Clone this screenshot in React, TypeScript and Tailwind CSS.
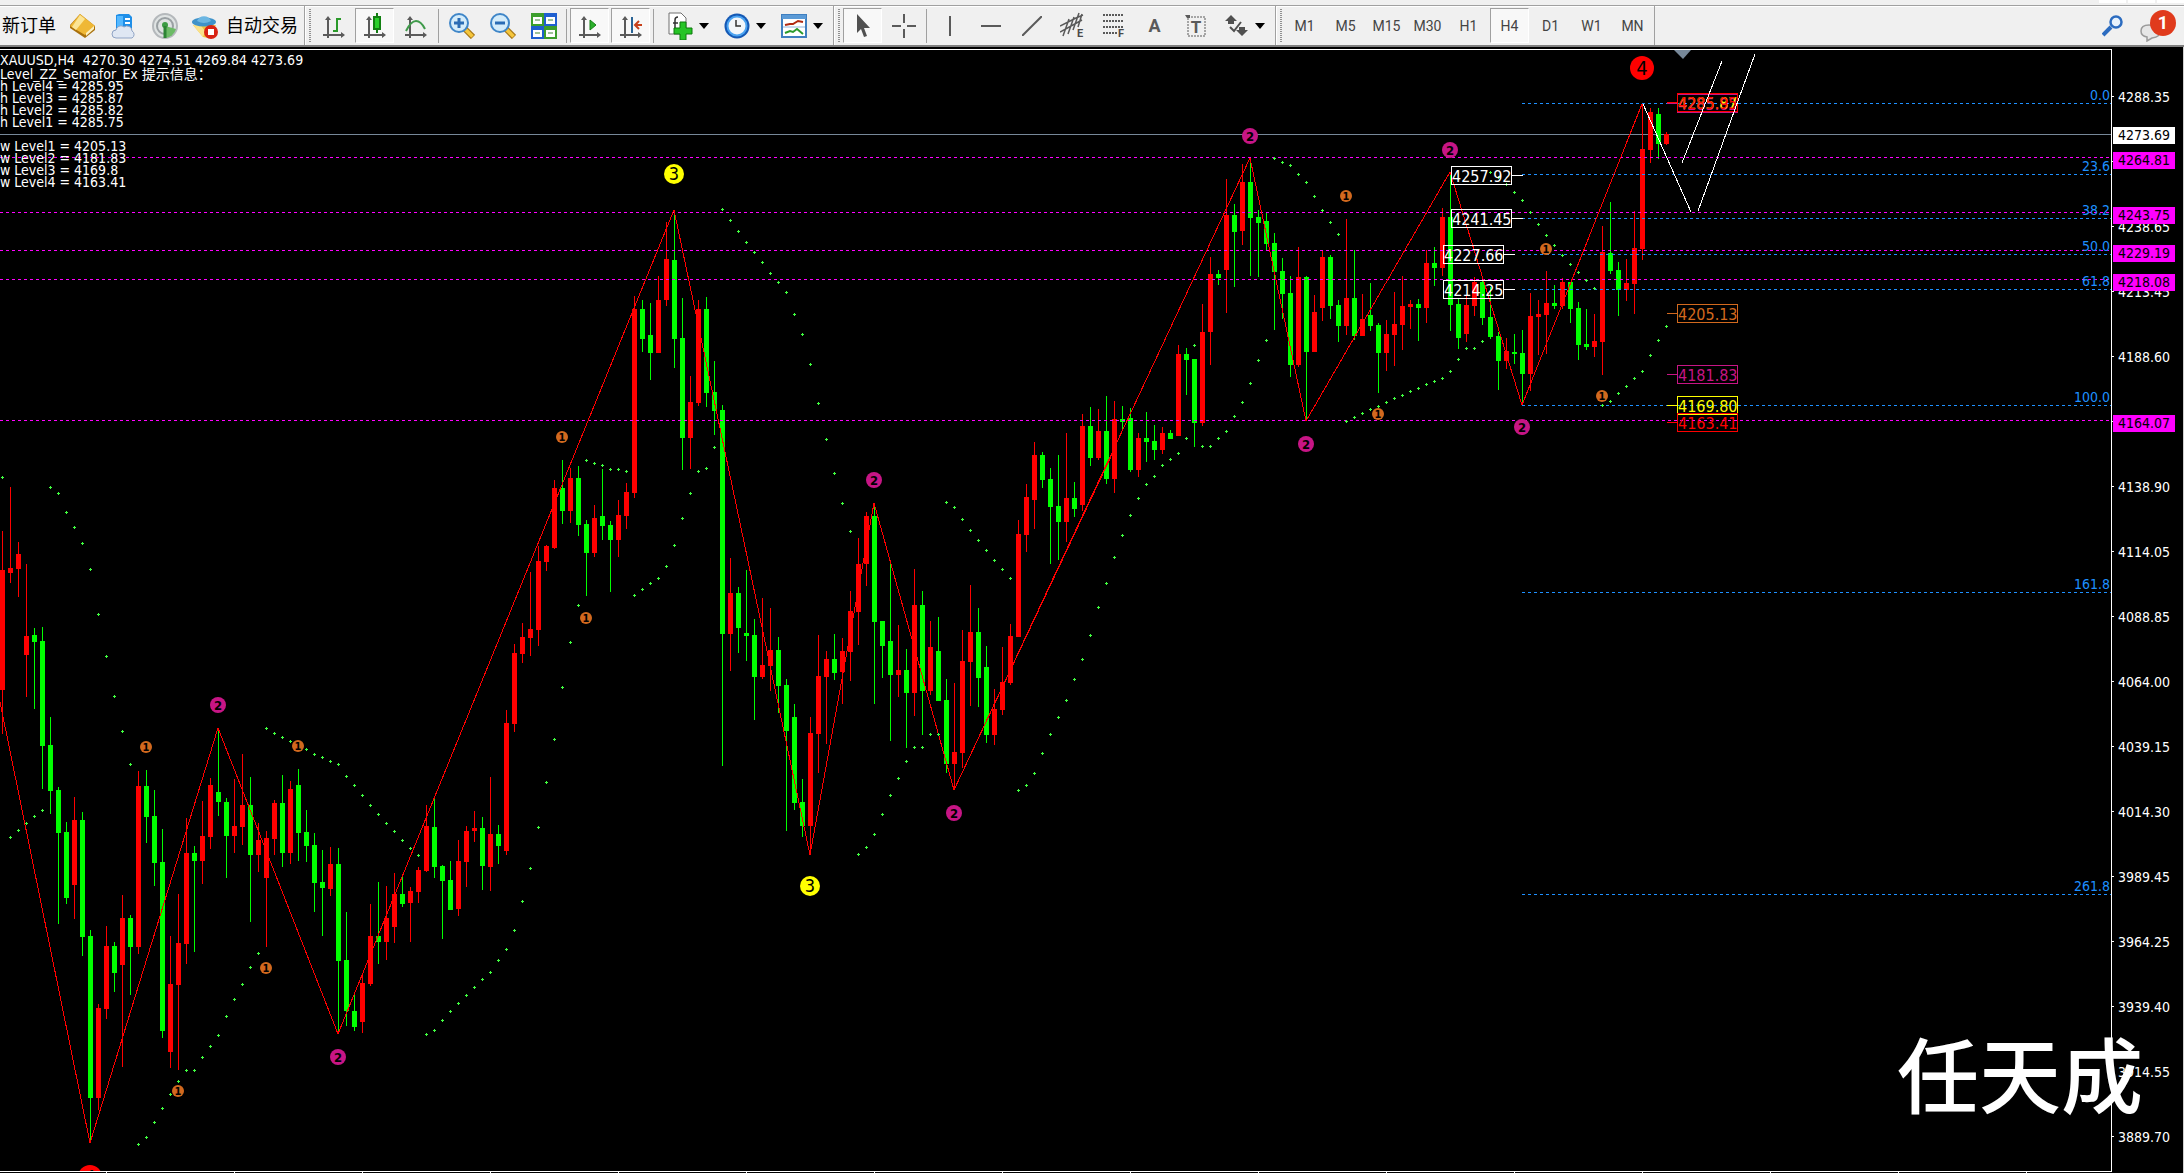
import type { ReactNode } from "react";

type Candle = [dir: number, high: number, top: number, bottom: number, low: number];

const STEP = 8;
const TOP = 50;

const candles: Candle[] = [
  [1, 531, 570, 690, 734], [1, 487, 568, 573, 583], [1, 542, 554, 569, 597], [1, 564, 636, 655, 697],
  [0, 628, 635, 642, 709], [0, 627, 641, 746, 789], [0, 717, 745, 791, 814], [0, 787, 790, 833, 924],
  [0, 822, 832, 898, 904], [1, 797, 820, 885, 919], [0, 812, 820, 937, 956], [0, 930, 936, 1098, 1143],
  [1, 1004, 1008, 1098, 1110], [1, 926, 946, 1009, 1019], [0, 942, 946, 973, 992], [1, 895, 918, 965, 1067],
  [0, 915, 918, 947, 995], [1, 771, 786, 947, 954], [0, 770, 786, 817, 843], [0, 790, 816, 863, 886],
  [0, 829, 862, 1031, 1038], [1, 936, 984, 1052, 1068], [1, 894, 943, 985, 1070], [1, 818, 853, 944, 964],
  [0, 846, 853, 861, 952], [1, 801, 836, 861, 884], [1, 778, 785, 837, 849], [0, 730, 792, 802, 816],
  [0, 798, 802, 836, 878], [1, 779, 826, 836, 853], [1, 754, 805, 827, 845], [0, 777, 805, 855, 922],
  [1, 823, 840, 855, 872], [1, 831, 838, 878, 947], [1, 800, 803, 839, 855], [0, 775, 803, 853, 867],
  [1, 781, 789, 853, 864], [0, 769, 785, 833, 861], [0, 810, 832, 846, 862], [0, 833, 845, 883, 912],
  [0, 850, 882, 888, 936], [1, 847, 864, 889, 896], [0, 848, 864, 961, 1034], [0, 912, 960, 1011, 1026],
  [0, 995, 1011, 1027, 1031], [1, 975, 983, 1022, 1033], [1, 904, 936, 984, 986], [0, 882, 936, 942, 964],
  [1, 886, 918, 942, 960], [1, 873, 894, 927, 943], [0, 874, 894, 904, 907], [1, 887, 891, 903, 942],
  [1, 867, 870, 892, 903], [1, 805, 826, 871, 872], [0, 797, 827, 867, 878], [0, 865, 866, 881, 939],
  [0, 861, 880, 910, 910], [1, 840, 861, 909, 916], [1, 826, 831, 862, 887], [1, 811, 828, 831, 842],
  [0, 817, 828, 866, 890], [1, 777, 834, 867, 891], [0, 825, 834, 846, 864], [1, 710, 723, 851, 855],
  [1, 644, 653, 724, 732], [1, 623, 637, 654, 663], [1, 572, 629, 638, 656], [1, 546, 561, 630, 646],
  [1, 545, 546, 562, 571], [1, 480, 488, 548, 549], [0, 460, 488, 511, 524], [1, 468, 478, 511, 523],
  [0, 466, 478, 525, 536], [0, 520, 524, 553, 596], [1, 505, 518, 553, 557], [0, 469, 516, 526, 540],
  [0, 521, 525, 540, 592], [1, 500, 515, 540, 557], [1, 483, 492, 516, 529], [1, 296, 309, 493, 498],
  [0, 300, 309, 339, 352], [0, 303, 335, 353, 380], [1, 276, 300, 353, 353], [1, 222, 259, 300, 306],
  [0, 212, 260, 339, 368], [0, 298, 338, 438, 470], [1, 376, 402, 438, 469], [1, 300, 309, 403, 406],
  [0, 297, 309, 393, 407], [0, 361, 392, 411, 435], [0, 405, 410, 634, 766], [1, 558, 593, 634, 671],
  [0, 587, 593, 628, 653], [0, 570, 633, 636, 661], [0, 619, 635, 677, 720], [1, 598, 665, 677, 679],
  [1, 608, 650, 666, 691], [0, 637, 650, 686, 713], [0, 679, 685, 731, 831], [0, 704, 717, 803, 810],
  [0, 779, 802, 826, 837], [1, 717, 733, 826, 855], [1, 635, 676, 734, 773], [1, 651, 659, 677, 744],
  [0, 634, 659, 673, 680], [1, 638, 651, 672, 704], [1, 591, 611, 652, 681], [1, 538, 564, 612, 645],
  [1, 512, 516, 564, 586], [0, 504, 516, 622, 704], [0, 621, 621, 646, 678], [0, 562, 641, 675, 741],
  [1, 625, 670, 675, 697], [0, 649, 670, 693, 748], [1, 569, 605, 693, 716], [0, 591, 605, 691, 735],
  [1, 621, 647, 691, 695], [0, 617, 651, 701, 701], [0, 679, 700, 764, 773], [1, 683, 752, 764, 790],
  [1, 630, 661, 753, 768], [1, 585, 632, 662, 706], [0, 608, 632, 678, 707], [0, 646, 667, 735, 743],
  [1, 689, 709, 735, 745], [1, 647, 682, 710, 715], [1, 624, 636, 683, 685], [1, 520, 534, 637, 637],
  [1, 484, 497, 535, 552], [1, 442, 455, 500, 529], [0, 452, 455, 480, 488], [0, 468, 479, 507, 564],
  [0, 455, 506, 522, 560], [1, 433, 498, 522, 542], [0, 482, 498, 509, 517], [1, 414, 426, 505, 511],
  [0, 407, 426, 458, 466], [1, 409, 431, 458, 460], [0, 396, 431, 479, 484], [1, 401, 419, 479, 493],
  [0, 406, 419, 422, 429], [0, 408, 418, 470, 472], [1, 433, 438, 470, 477], [0, 412, 438, 442, 462],
  [0, 425, 441, 450, 460], [1, 427, 433, 450, 454], [0, 430, 433, 439, 439], [1, 345, 354, 436, 436],
  [0, 348, 354, 360, 395], [0, 359, 359, 423, 447], [1, 304, 332, 423, 426], [1, 257, 274, 332, 365],
  [0, 270, 274, 278, 285], [1, 179, 215, 270, 313], [0, 204, 215, 232, 287], [1, 164, 182, 231, 245],
  [0, 160, 182, 218, 276], [0, 210, 217, 223, 277], [0, 213, 221, 244, 251], [0, 233, 243, 272, 330],
  [0, 258, 271, 294, 319], [0, 276, 293, 365, 377], [1, 247, 277, 365, 367], [0, 276, 277, 352, 421],
  [1, 295, 312, 352, 352], [1, 250, 257, 308, 321], [0, 255, 257, 306, 319], [0, 300, 305, 326, 342],
  [1, 219, 298, 326, 335], [0, 250, 298, 336, 340], [1, 294, 319, 336, 336], [0, 283, 315, 326, 331],
  [0, 323, 325, 353, 393], [1, 320, 334, 353, 371], [1, 292, 324, 335, 366], [1, 276, 306, 325, 350],
  [1, 300, 304, 307, 329], [0, 299, 304, 308, 341], [1, 250, 263, 308, 323], [0, 247, 263, 268, 286],
  [1, 208, 217, 268, 276], [0, 173, 217, 305, 331], [0, 299, 304, 338, 349], [1, 295, 305, 334, 342],
  [1, 277, 282, 306, 316], [0, 280, 282, 318, 325], [0, 287, 317, 337, 339], [0, 332, 336, 361, 390],
  [1, 338, 351, 361, 369], [0, 334, 352, 354, 364], [0, 330, 353, 374, 405], [1, 293, 316, 374, 391],
  [1, 300, 314, 317, 355], [1, 271, 303, 315, 354], [0, 285, 303, 306, 309], [1, 278, 282, 306, 309],
  [0, 282, 282, 309, 323], [0, 302, 308, 345, 360], [0, 309, 344, 347, 350], [1, 314, 341, 347, 357],
  [1, 226, 252, 342, 375], [0, 202, 253, 271, 274], [0, 262, 270, 290, 316], [1, 259, 283, 290, 301],
  [1, 211, 248, 284, 314], [1, 104, 149, 249, 260], [1, 108, 112, 150, 163], [0, 108, 114, 144, 159],
  [1, 132, 134, 144, 145],
];

const sar = [
  477, 837, 830, 823, 816, 810, 487, 493, 512, 527, 543, 569, 614, 656, 696, 731, 764, 1144, 1137, 1122,
  1108, 1094, 1081, 1070, 1070, 1057, 1046, 1035, 1016, 999, 984, 967, 953, 728, 733, 737, 741, 746, 749, 754,
  757, 761, 764, 776, 785, 795, 805, 814, 823, 831, 840, 848, 855, 1034, 1030, 1020, 1011, 1003, 995, 987,
  979, 972, 960, 949, 930, 901, 868, 827, 782, 739, 687, 642, 605, 460, 463, 465, 469, 469, 471, 595,
  589, 583, 578, 566, 545, 518, 493, 471, 468, 447, 209, 220, 231, 242, 252, 262, 273, 282, 292, 314,
  334, 364, 403, 439, 473, 503, 531, 854, 847, 834, 814, 795, 778, 761, 747, 747, 734, 734, 502, 507,
  519, 530, 540, 550, 560, 569, 578, 790, 785, 773, 753, 734, 717, 700, 679, 659, 635, 607, 583, 557,
  535, 515, 498, 484, 476, 465, 459, 453, 438, 345, 446, 446, 438, 431, 416, 402, 383, 360, 340, 158,
  162, 165, 174, 182, 196, 210, 222, 234, 421, 417, 413, 409, 406, 402, 398, 395, 391, 388, 384, 381,
  378, 371, 359, 348, 348, 341, 172, 177, 184, 192, 200, 212, 224, 235, 245, 255, 264, 272, 280, 288,
  405, 401, 393, 386, 378, 371, 355, 340, 326,
];

const zigzag =
  "0,702 90,1143 218,728 338,1034 674,210 810,855 874,503 954,790 1250,158 1306,421 1450,172 1522,405 1642,104";

const semafor = [
  { level: 1, x: 146, y: 747 }, { level: 1, x: 298, y: 746 }, { level: 1, x: 266, y: 968 },
  { level: 1, x: 178, y: 1091 }, { level: 1, x: 562, y: 437 }, { level: 1, x: 586, y: 618 },
  { level: 1, x: 1346, y: 196 }, { level: 1, x: 1378, y: 414 }, { level: 1, x: 1546, y: 249 },
  { level: 1, x: 1602, y: 396 }, { level: 2, x: 218, y: 705 }, { level: 2, x: 338, y: 1057 },
  { level: 2, x: 874, y: 480 }, { level: 2, x: 954, y: 813 }, { level: 2, x: 1250, y: 136 },
  { level: 2, x: 1450, y: 150 }, { level: 2, x: 1306, y: 444 }, { level: 2, x: 1522, y: 427 },
  { level: 3, x: 674, y: 174 }, { level: 3, x: 810, y: 886 }, { level: 4, x: 1642, y: 68 },
  { level: 4, x: 90, y: 1177 },
];

const semaforStyle = [
  { r: 6, size: 11, fill: "#d2691e" },
  { r: 8, size: 13, fill: "#c71585" },
  { r: 10, size: 18, fill: "#ffff00" },
  { r: 12, size: 20, fill: "#ff0000" },
];

const supports = [157, 212, 250, 279, 420];

const fibs = [
  { y: 103, label: "0.0" },
  { y: 174, label: "23.6" },
  { y: 218, label: "38.2" },
  { y: 254, label: "50.0" },
  { y: 289, label: "61.8" },
  { y: 405, label: "100.0" },
  { y: 592, label: "161.8" },
  { y: 894, label: "261.8" },
];

const leftTags = [
  { x: 1451, y: 166, text: "4257.92" },
  { x: 1451, y: 209, text: "4241.45" },
  { x: 1443, y: 245, text: "4227.66" },
  { x: 1443, y: 280, text: "4214.25" },
];

const rightTags = [
  { y: 94, text: "4285.82", color: "#c71585" },
  { y: 93, text: "4285.87", color: "#ffff00" },
  { y: 93, text: "4285.95", color: "#ff0000" },
  { y: 304, text: "4205.13", color: "#d2691e" },
  { y: 365, text: "4181.83", color: "#c71585" },
  { y: 396, text: "4169.80", color: "#ffff00" },
  { y: 413, text: "4163.41", color: "#ff0000" },
];

const prices = [
  "4288.35", "4263.50", "4238.65", "4213.45", "4188.60", "4163.75", "4138.90", "4114.05", "4088.85",
  "4064.00", "4039.15", "4014.30", "3989.45", "3964.25", "3939.40", "3914.55", "3889.70",
];

const priceMarks = [
  { y: 126, text: "4273.69", style: "bg-white" },
  { y: 151, text: "4264.81", style: "bg-[#ff00ff]" },
  { y: 206, text: "4243.75", style: "bg-[#ff00ff]" },
  { y: 244, text: "4229.19", style: "bg-[#ff00ff]" },
  { y: 273, text: "4218.08", style: "bg-[#ff00ff]" },
  { y: 414, text: "4164.07", style: "bg-[#ff00ff]" },
];

const comment = [
  "Level_ZZ_Semafor_Ex 提示信息：",
  "h Level4 = 4285.95",
  "h Level3 = 4285.87",
  "h Level2 = 4285.82",
  "h Level1 = 4285.75",
  "",
  "w Level1 = 4205.13",
  "w Level2 = 4181.83",
  "w Level3 = 4169.8",
  "w Level4 = 4163.41",
];

const timeframes = ["M1", "M5", "M15", "M30", "H1", "H4", "D1", "W1", "MN"];

function ToolButton({ label, active, children }: { label: string; active?: boolean; children: ReactNode }) {
  return (
    <button
      type="button"
      aria-label={label}
      className={
        active
          ? "flex h-[35px] w-[39px] shrink-0 items-center justify-center border border-[#a0a0a0] border-r-white border-b-white bg-[#f8f8f8]"
          : "flex h-[35px] w-[39px] shrink-0 items-center justify-center"
      }
    >
      {children}
    </button>
  );
}

function MenuButton({ label, children }: { label: string; children: ReactNode }) {
  return (
    <button type="button" aria-label={label} className="flex h-[35px] w-[55px] shrink-0 items-center gap-1.5 pl-1.5">
      {children}
      <svg className="shrink-0" width="10" height="6" viewBox="0 0 10 6">
        <path d="M0 0h10L5 6z" fill="#000" />
      </svg>
    </button>
  );
}

function Separator() {
  return <div className="mx-[3px] h-[34px] w-px shrink-0 bg-[#a0a0a0]" />;
}

function Grip() {
  return (
    <div className="ml-[3px] flex h-full shrink-0 items-center gap-[3px] border-l border-[#a0a0a0] pr-[3px]">
      <div className="h-full w-px bg-white" />
      <div className="h-[33px] w-0.5 bg-[repeating-linear-gradient(to_bottom,#909090_0_1px,#f0f0f0_1px_2px)]" />
    </div>
  );
}

function Axes({ children }: { children: ReactNode }) {
  return (
    <svg width="22" height="26" viewBox="0 0 22 26" fill="none" stroke="#5a5a5a" strokeWidth="2">
      <path d="M5 6v19M0 22h19" />
      <path d="M5 3l3 4H2zM22 22l-4-3v6z" fill="#5a5a5a" stroke="none" />
      {children}
    </svg>
  );
}

function Magnifier({ plus }: { plus?: boolean }) {
  return (
    <svg width="26" height="26" viewBox="0 0 26 26">
      <path d="M15 15l9 9" stroke="#a8781a" strokeWidth="6" />
      <path d="M15 15l8.500 8.500" stroke="#f5c63c" strokeWidth="3.500" />
      <circle cx="10" cy="10" r="9" fill="#d4ecfa" stroke="#3f86c8" strokeWidth="2" />
      <path d="M5 10h10" stroke="#2a6cb5" strokeWidth="3" />
      {plus && <path d="M10 5v10" stroke="#2a6cb5" strokeWidth="3" />}
    </svg>
  );
}

function Toolbar() {
  return (
    <header className="shrink-0 bg-[#f0f0f0] font-[Roboto,'Noto_Sans_CJK_SC',sans-serif] text-black">
      <div className="flex h-[5px] justify-end gap-0.5">
        <div className="h-[3px] w-[27px] bg-white" />
        <div className="h-[3px] w-[27px] bg-white" />
        <div className="h-[3px] w-[27px] bg-white" />
      </div>
      <div className="flex h-10 items-center border-t border-[#a0a0a0] shadow-[inset_0_1px_0_#fff]">
        <button type="button" className="h-[35px] w-[63px] shrink-0 pl-0.5 text-left text-lg whitespace-nowrap">
          新订单
        </button>
        <div className="flex shrink-0 gap-0.5">
          <ToolButton label="Market watch">
            <svg width="26" height="26" viewBox="0 0 26 26">
              <path d="M10 1l15 12v4L15 25 0 15v-3z" fill="#a8700c" />
              <path d="M10 1l15 12-10 9L0 13z" fill="#efb836" />
              <path d="M10 2l5 4-9 11-4-3z" fill="#fbe596" />
              <path d="M16 20l8-7v3l-8 7z" fill="#fdf0c0" />
            </svg>
          </ToolButton>
          <ToolButton label="Virtual hosting">
            <svg width="26" height="26" viewBox="0 0 26 26">
              <path d="M5 2l3-1h10l3 3v13H5z" fill="#1f8fe8" />
              <path d="M6 3h6v12H6z" fill="#54b8ff" />
              <path d="M14 6h5M14 10h5" stroke="#fff" strokeWidth="2" />
              <path d="M5 25a4 4 0 010-8 5 5 0 018-3 5 5 0 018 4 4 4 0 010 7z" fill="#dfe7f3" stroke="#8fa3c4" />
            </svg>
          </ToolButton>
          <ToolButton label="Signals">
            <svg width="26" height="26" viewBox="0 0 26 26" fill="none">
              <circle cx="13" cy="13" r="12" fill="#dfe3e3" stroke="#b4b8bb" strokeWidth="2" />
              <circle cx="13" cy="13" r="8" stroke="#9aa0a3" strokeWidth="2" />
              <path d="M13 13v12a12 12 0 0011-9z" fill="#6cbb66" />
              <circle cx="13" cy="12" r="3" fill="#3c9c44" />
              <path d="M13 13v12" stroke="#2c8434" strokeWidth="3" />
            </svg>
          </ToolButton>
        </div>
        <button type="button" className="flex h-[35px] w-[117px] shrink-0 items-center gap-2 pl-2 text-lg whitespace-nowrap">
          <svg className="shrink-0" width="26" height="26" viewBox="0 0 26 26">
            <path d="M1 12h23l-8 13-5-1z" fill="#f0c53e" />
            <path d="M1 12l6-2 6 8-2 6z" fill="#fae28a" />
            <ellipse cx="12" cy="9" rx="12" ry="4.500" fill="#3f92c9" />
            <path d="M5 8a7.500 7.500 0 0114 0q-7 4-14 0z" fill="#6cb6e2" />
            <circle cx="19" cy="19" r="7" fill="#d92314" />
            <path d="M16 16h6v6h-6z" fill="#fff" />
          </svg>
          自动交易
        </button>
        <Grip />
        <div className="flex shrink-0 gap-0.5">
          <ToolButton label="Bar chart">
            <Axes>
              <path d="M14 5v14M14 6h4M10 18h4" stroke="#2a9a2a" />
            </Axes>
          </ToolButton>
          <ToolButton label="Candlesticks" active>
            <Axes>
              <path d="M13 0v20" stroke="#127a12" />
              <path d="M10 4h6v12h-6z" fill="#2bd02b" stroke="#128012" />
            </Axes>
          </ToolButton>
          <ToolButton label="Line chart">
            <Axes>
              <path d="M1 18Q6 8 11 8t9 8" stroke="#3f9a4a" />
            </Axes>
          </ToolButton>
        </div>
        <Separator />
        <div className="flex shrink-0 gap-0.5">
          <ToolButton label="Zoom in">
            <Magnifier plus />
          </ToolButton>
          <ToolButton label="Zoom out">
            <Magnifier />
          </ToolButton>
          <ToolButton label="Tile windows">
            <svg width="26" height="26" viewBox="0 0 26 26">
              <path d="M0 0h13v13H0zM13 13h13v13H13z" fill="#3c9e2c" />
              <path d="M13 0h13v13H13zM0 13h13v13H0z" fill="#1f5fd0" />
              <path d="M2 4h9v7H2zM15 4h9v7h-9zM2 17h9v7H2zM15 17h9v7h-9z" fill="#fff" />
              <path d="M4 7h5M17 7h5M4 20h5M17 20h5" stroke="#9ec39a" strokeWidth="2" />
            </svg>
          </ToolButton>
        </div>
        <Separator />
        <div className="flex shrink-0 gap-0.5">
          <ToolButton label="Auto scroll" active>
            <Axes>
              <path d="M11 7l6 5-6 5z" fill="#2bb02b" stroke="#168016" strokeWidth="1" />
            </Axes>
          </ToolButton>
          <ToolButton label="Chart shift" active>
            <Axes>
              <path d="M12 4v16" stroke="#2a6496" />
              <path d="M22 12h-7m4-4l-4 4 4 4" stroke="#c8401a" />
            </Axes>
          </ToolButton>
        </div>
        <Separator />
        <div className="flex shrink-0 gap-0.5 pl-1">
          <MenuButton label="Indicators">
            <svg className="shrink-0" width="26" height="28" viewBox="0 0 26 28">
              <path d="M2 1h12l5 5v16H2z" fill="#fff" stroke="#707070" />
              <path d="M8 18V8q0-3 3-3M6 11h5" stroke="#333" fill="none" strokeWidth="1.500" />
              <path d="M13 10h6v6h6v6h-6v6h-6v-6H7v-6h6z" fill="#25c425" stroke="#0c7a0c" />
            </svg>
          </MenuButton>
          <MenuButton label="Periods">
            <svg className="shrink-0" width="26" height="26" viewBox="0 0 26 26">
              <circle cx="13" cy="13" r="12.500" fill="#1458b4" />
              <circle cx="13" cy="13" r="10.500" fill="#4aa2f0" />
              <circle cx="13" cy="13" r="8.500" fill="#f2f6fa" />
              <path d="M12 7v6h5" stroke="#333" strokeWidth="1.500" fill="none" />
            </svg>
          </MenuButton>
          <MenuButton label="Templates">
            <svg className="shrink-0" width="26" height="24" viewBox="0 0 26 24">
              <path d="M1 1h24v22H1z" fill="#fff" stroke="#3f7fc0" strokeWidth="2" />
              <path d="M1 1h24v4H1z" fill="#5b9ad6" />
              <path d="M4 11l5-1 3 0 5-3 5 1" stroke="#b02a10" strokeWidth="2" fill="none" />
              <path d="M4 19l5-2 3 1 4-3 6 5" stroke="#2b9a2b" strokeWidth="2" fill="none" />
              <path d="M2 13h22" stroke="#8fb4dc" />
            </svg>
          </MenuButton>
        </div>
        <Grip />
        <div className="flex shrink-0 gap-0.5">
          <ToolButton label="Cursor" active>
            <svg width="14" height="24" viewBox="0 0 14 24">
              <path d="M1 0v19l4-4 3 8 3-1-3-8h6z" fill="#505050" />
            </svg>
          </ToolButton>
          <ToolButton label="Crosshair">
            <svg width="24" height="24" viewBox="0 0 24 24" stroke="#5a5a5a" strokeWidth="2">
              <path d="M12 0v9M12 15v9M0 12h9M15 12h9" />
            </svg>
          </ToolButton>
        </div>
        <Separator />
        <div className="flex shrink-0 gap-0.5">
          <ToolButton label="Vertical line">
            <svg width="4" height="20" viewBox="0 0 4 20">
              <path d="M2 0v20" stroke="#5a5a5a" strokeWidth="2" />
            </svg>
          </ToolButton>
          <ToolButton label="Horizontal line">
            <svg width="20" height="4" viewBox="0 0 20 4">
              <path d="M0 2h20" stroke="#5a5a5a" strokeWidth="2" />
            </svg>
          </ToolButton>
          <ToolButton label="Trend line">
            <svg width="20" height="20" viewBox="0 0 20 20">
              <path d="M0 20L20 0" stroke="#5a5a5a" strokeWidth="2" />
            </svg>
          </ToolButton>
          <ToolButton label="Equidistant channel">
            <svg width="26" height="28" viewBox="0 0 26 28" fill="none" stroke="#5a5a5a" strokeWidth="1.500">
              <path d="M0 14L16 6l7-3M0 20l22-12M3 24L9 7M8 22l6-17M13 18L19 1M18 15l4-13" />
              <text x="17" y="25" fontSize="11" fontWeight="700" fill="#4a4a4a" stroke="none">E</text>
            </svg>
          </ToolButton>
          <ToolButton label="Fibonacci retracement">
            <svg width="24" height="28" viewBox="0 0 24 28" fill="none" stroke="#5a5a5a" strokeWidth="2">
              <path d="M1 3h21M1 9h21M1 15h21M1 21h14" strokeDasharray="2 1" />
              <text x="16" y="25" fontSize="11" fontWeight="700" fill="#4a4a4a" stroke="none">F</text>
            </svg>
          </ToolButton>
          <ToolButton label="Text">
            <span className="text-lg font-bold text-[#5a5a5a]">A</span>
          </ToolButton>
          <ToolButton label="Text label">
            <svg width="22" height="24" viewBox="0 0 22 24" fill="none" stroke="#5a5a5a">
              <rect x="3" y="3" width="17" height="19" strokeDasharray="2 1" />
              <path d="M0 1h5v3H2z" fill="#5a5a5a" stroke="none" />
              <text x="11" y="19" fontSize="17" fontWeight="700" textAnchor="middle" fill="#5a5a5a" stroke="none">T</text>
            </svg>
          </ToolButton>
          <MenuButton label="Arrows">
            <svg className="shrink-0" width="26" height="22" viewBox="-2 0 26 22">
              <path d="M6 0l6 6h-3v3H3V6H0zM17 21l-6-6h3v-3h6v3h3z" fill="#505050" />
              <path d="M5 12l4 4 7-9" stroke="#505050" strokeWidth="2" fill="none" />
            </svg>
          </MenuButton>
        </div>
        <Grip />
        <div className="flex h-full shrink-0 items-center gap-0.5 border-r border-[#a0a0a0] pr-0.5">
          {timeframes.map((tf) => (
            <button
              key={tf}
              type="button"
              className={
                tf === "H4"
                  ? "h-[35px] w-[39px] border border-[#a0a0a0] border-r-white border-b-white bg-[#f8f8f8] text-sm text-[#444]"
                  : "h-[35px] w-[39px] text-sm text-[#444]"
              }
            >
              {tf}
            </button>
          ))}
        </div>
        <div className="ml-auto flex shrink-0 items-center gap-4 pr-2">
          <button type="button" aria-label="Search">
            <svg width="22" height="22" viewBox="0 0 22 22" fill="none">
              <path d="M9 12l-8 8" stroke="#2c6cc0" strokeWidth="4" />
              <circle cx="14" cy="7" r="5.500" fill="#e8f2fc" stroke="#2c6cc0" strokeWidth="2.500" />
            </svg>
          </button>
          <button type="button" aria-label="Notifications" className="relative h-8 w-9">
            <svg className="absolute bottom-0 left-0" width="24" height="18" viewBox="0 0 24 18">
              <path d="M1 7q0-6 8-6t10 6-7 7l-5 3v-4q-6-1-6-6z" fill="#e6e6e6" stroke="#9a9a9a" strokeWidth="1.500" />
            </svg>
            <span className="absolute top-0 right-0 flex size-[26px] items-center justify-center rounded-full bg-[#e03a1c] text-lg font-bold text-white">
              1
            </span>
          </button>
        </div>
      </div>
      <div className="h-0.5 bg-[#808080]" />
    </header>
  );
}

function PriceTag({ x, y, text, color }: { x: number; y: number; text: string; color: string }) {
  return (
    <g>
      <rect x={x + 0.5} y={y + 0.5} width="60" height="18" fill="none" stroke={color} />
      <text x={x + 1} y={y + 16} fontSize="16" fill={color}>
        {text}
      </text>
    </g>
  );
}

function Plot() {
  return (
    <svg className="absolute inset-0 size-full" shapeRendering="crispEdges">
      <g transform={`translate(0 ${-TOP})`}>
        <rect x="0" y="134" width="100%" height="1" fill="#778899" />
        {candles.map(([dir, high, top, bottom, low], i) => (
          <g key={i} fill={dir ? "#ff0000" : "#00ff00"}>
            <rect x={i * STEP + 2} y={high} width="1" height={low - high} />
            <rect x={i * STEP} y={top} width="5" height={bottom - top} />
          </g>
        ))}
        {supports.map((y) => (
          <line key={y} x1="0" x2="100%" y1={y + 0.5} y2={y + 0.5} stroke="#ff00ff" strokeDasharray="3 3" />
        ))}
        {fibs.map(({ y, label }) => (
          <g key={label}>
            <line x1="1522" x2="100%" y1={y + 0.5} y2={y + 0.5} stroke="#1e90ff" strokeDasharray="3 3" />
            <text x="100%" y={y - 3} dx="-1" fontSize="14" textAnchor="end" fill="#1e90ff">
              {label}
            </text>
          </g>
        ))}
        <polyline points={zigzag} fill="none" stroke="#ff0000" />
        <path d="M954 790L1114 450" stroke="#ff0000" />
        {sar.map((y, i) => (
          <path key={i} d={`M${i * STEP + 1} ${y + 0.5}h3M${i * STEP + 2.5} ${y - 1}v3`} stroke="#40ff40" />
        ))}
        {semafor.map(({ level, x, y }) => {
          const { r, size, fill } = semaforStyle[level - 1];
          return (
            <g key={`${x}-${y}`} shapeRendering="auto">
              <circle cx={x} cy={y} r={r} fill={fill} />
              <text x={x} y={y + size * 0.36} fontSize={size} fontWeight={level < 3 ? 700 : 400} textAnchor="middle" fill="#000">
                {level}
              </text>
            </g>
          );
        })}
        {leftTags.map(({ x, y, text }) => (
          <g key={text}>
            <PriceTag x={x} y={y} text={text} color="#fff" />
            <path d={`M${x + 61} ${y + 9.5}h11`} stroke="#fff" />
          </g>
        ))}
        {rightTags.map(({ y, text, color }) => (
          <g key={text}>
            <PriceTag x={1677} y={y} text={text} color={color} />
            <path d={`M1667 ${y + 9.5}h10`} stroke={color} />
          </g>
        ))}
        <path d="M1643 104L1691 212M1722 61L1682 163M1755 54L1698 211" fill="none" stroke="#fff" />
        <path d="M1674 50h17l-8 9z" fill="#778899" shapeRendering="auto" />
      </g>
    </svg>
  );
}

export default function App() {
  return (
    <div className="flex min-h-screen flex-col bg-black font-['DejaVu_Sans_Condensed','Noto_Sans','Noto_Sans_CJK_SC',sans-serif]">
      <Toolbar />
      <main className="relative flex min-h-[1126px] flex-1 overflow-hidden border-r border-[#d0d0d0] pt-0.5">
        <div className="flex min-w-0 flex-1 flex-col">
          <div className="relative flex-1 overflow-hidden border-t border-r border-b border-white">
            <Plot />
            <div className="relative pt-1 text-sm leading-3 whitespace-pre text-white">
              <p className="h-[14px]">XAUUSD,H4  4270.30 4274.51 4269.84 4273.69</p>
              {comment.map((line, i) => (
                <p key={i} className="h-3">
                  {line}
                </p>
              ))}
            </div>
          </div>
          <div className="h-px shrink-0 bg-[repeating-linear-gradient(to_right,#000_0_106px,#fff_106px_107px,#000_107px_128px)]" />
        </div>
        <div className="relative w-[71px] shrink-0 pt-4 text-sm text-white">
          {prices.map((price) => (
            <div key={price} className="flex h-[65px] items-start gap-1">
              <div className="mt-[31px] h-px w-0.5 bg-white" />
              <span className="mt-[22px] leading-5">{price}</span>
            </div>
          ))}
          {priceMarks.map(({ y, text, style }) => (
            <div
              key={text}
              className={`absolute left-px h-[17px] w-[62px] pl-[5px] leading-[17px] text-black ${style}`}
              style={{ top: y - TOP + 2 }}
            >
              {text}
            </div>
          ))}
        </div>
        <div className="absolute right-10 bottom-14 font-['Noto_Sans_CJK_SC',sans-serif] text-[82px] leading-[90px] font-medium text-white">
          任天成
        </div>
      </main>
    </div>
  );
}
